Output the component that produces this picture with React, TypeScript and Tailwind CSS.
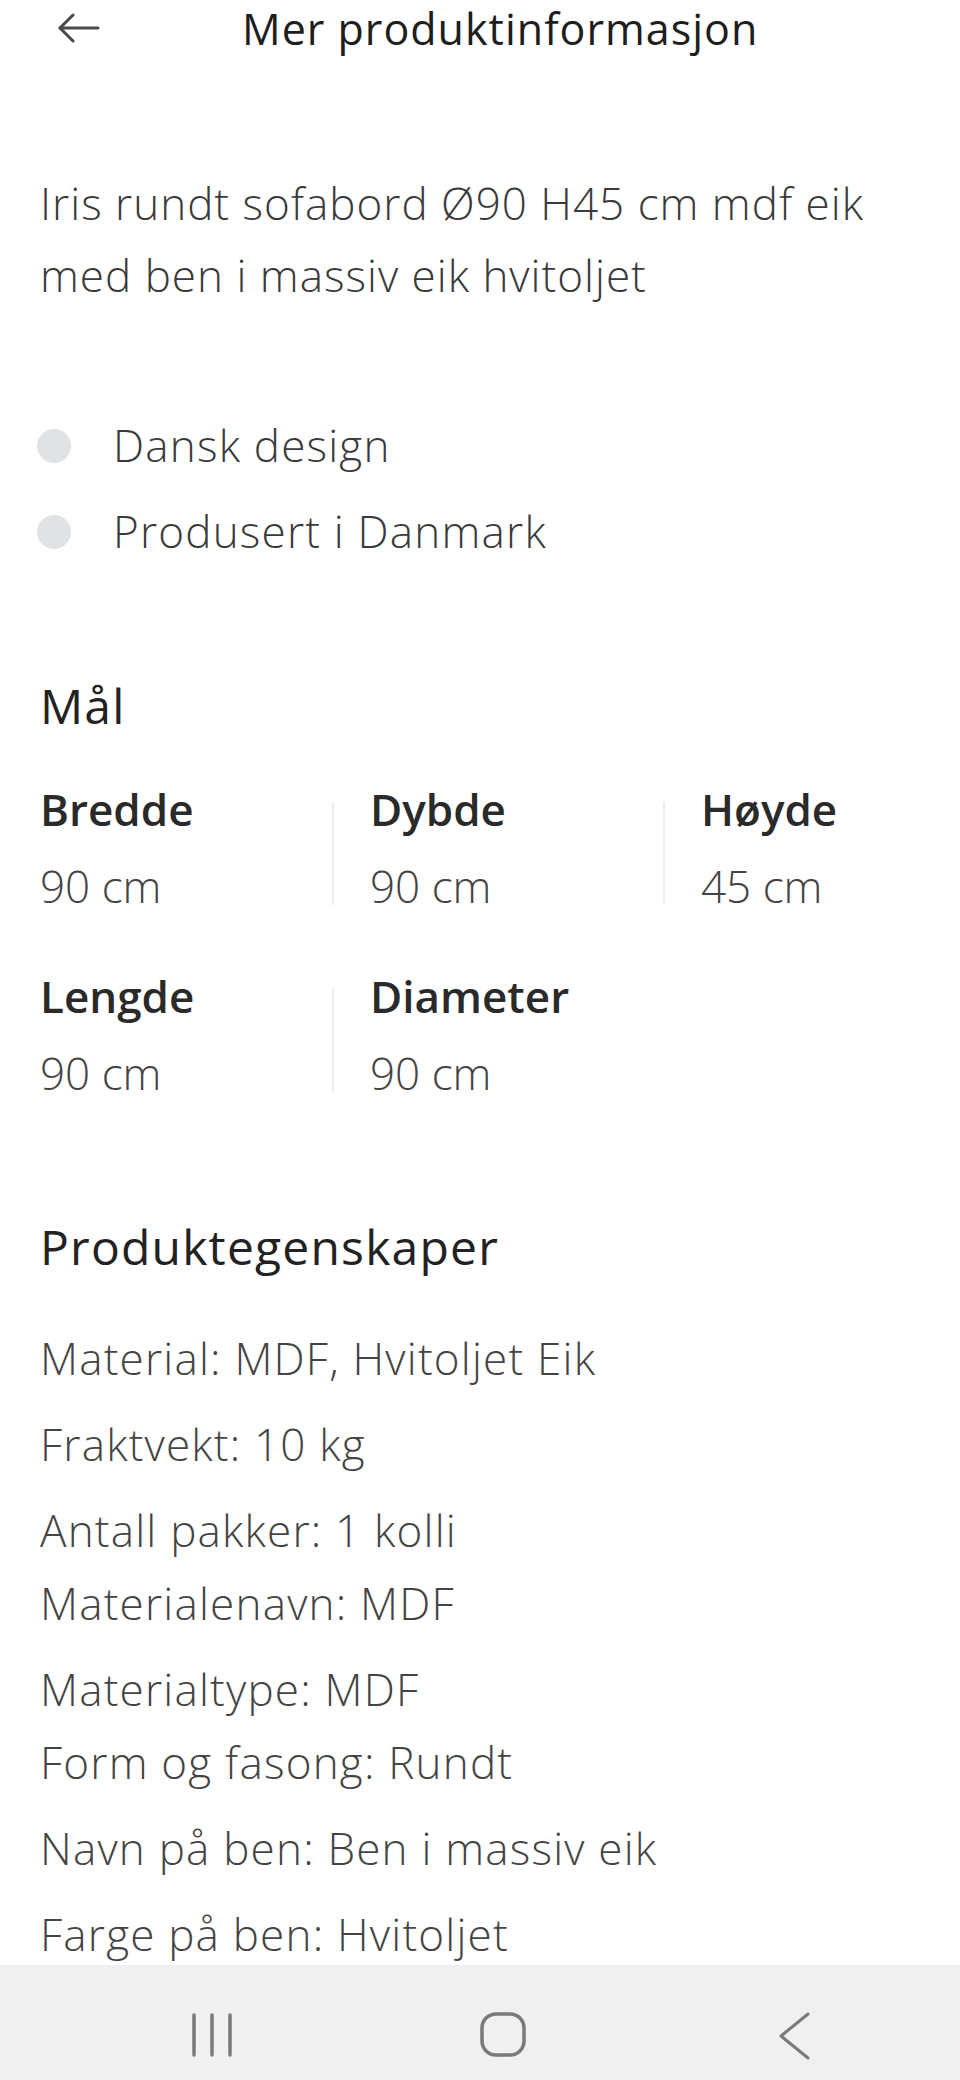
import React from "react";

const font = { fontFamily: '"Open Sans", "Noto Sans", sans-serif' };

function BackArrow() {
  return (
    <svg width="44" height="32" viewBox="0 0 44 32" fill="none" stroke="#4a4a4a" strokeWidth="3" strokeLinecap="round" strokeLinejoin="round">
      <path d="M2 15 H40" />
      <path d="M15 2 L2 15 L15 28" />
    </svg>
  );
}

function Dimension({ label, value }: { label: string; value: string }) {
  return (
    <div>
      <div className="text-[44px] leading-[56px] font-semibold text-[#2a2a2a]">{label}</div>
      <div className="mt-[21px] text-[44px] leading-[56px] font-light text-[#444]">{value}</div>
    </div>
  );
}

function Divider() {
  return <div className="w-[2px] self-stretch mt-[21px] mb-[9px] bg-[#ececec]" />;
}

export default function App() {
  const props: string[][] = [
    ["Material: MDF, Hvitoljet Eik"],
    ["Fraktvekt: 10 kg"],
    ["Antall pakker: 1 kolli", "Materialenavn: MDF"],
    ["Materialtype: MDF", "Form og fasong: Rundt"],
    ["Navn på ben: Ben i massiv eik"],
    ["Farge på ben: Hvitoljet"],
  ];

  return (
    <div className="h-[2080px] w-[960px] flex flex-col bg-white overflow-hidden" style={font}>
      <main className="flex-1 overflow-hidden">
        {/* header */}
        <header className="h-[58px] flex items-center">
          <button className="ml-[58px] w-[44px] h-[32px] flex items-center">
            <BackArrow />
          </button>
          <h1 className="ml-[140px] text-[43px] leading-[58px] font-medium text-[#1e1e1e] tracking-[1px]">
            Mer produktinformasjon
          </h1>
        </header>

        {/* description */}
        <p className="mt-[109px] px-[40px] text-[44px] leading-[72px] font-light text-[#3a3a3a] tracking-[1px]">
          Iris rundt sofabord Ø90 H45 cm mdf eik med ben i massiv eik hvitoljet
        </p>

        {/* highlights */}
        <ul className="mt-[91px] pl-[37px]">
          {["Dansk design", "Produsert i Danmark"].map((t) => (
            <li key={t} className="flex items-center h-[86px]">
              <span className="w-[34px] h-[34px] rounded-full bg-[#dfe3e5] mt-[2px]" />
              <span className="ml-[42px] text-[44px] leading-[86px] font-light text-[#3a3a3a] tracking-[1.2px]">{t}</span>
            </li>
          ))}
        </ul>

        {/* dimensions */}
        <section className="mt-[102px] px-[40px]">
          <h2 className="text-[48px] leading-[60px] font-medium text-[#222] tracking-[1.2px]">Mål</h2>
          <div className="mt-[45px] flex">
            <div className="w-[292px]">
              <Dimension label="Bredde" value="90 cm" />
            </div>
            <Divider />
            <div className="w-[329px] pl-[36px]">
              <Dimension label="Dybde" value="90 cm" />
            </div>
            <Divider />
            <div className="pl-[36px]">
              <Dimension label="Høyde" value="45 cm" />
            </div>
          </div>
          <div className="mt-[54px] flex">
            <div className="w-[292px]">
              <Dimension label="Lengde" value="90 cm" />
            </div>
            <Divider />
            <div className="w-[329px] pl-[36px]">
              <Dimension label="Diameter" value="90 cm" />
            </div>
          </div>
        </section>

        {/* properties */}
        <section className="mt-[116px] px-[40px]">
          <h2 className="text-[48px] leading-[60px] font-medium text-[#222] tracking-[1.2px]">Produktegenskaper</h2>
          <div className="mt-[45px] flex flex-col gap-[13px]">
            {props.map((lines, i) => (
              <p key={i} className="text-[44px] leading-[73px] font-light text-[#444] tracking-[1.2px]">
                {lines.map((l, j) => (
                  <span key={j} className="block">{l}</span>
                ))}
              </p>
            ))}
          </div>
        </section>
      </main>

      {/* system navigation bar */}
      <nav className="h-[115px] shrink-0 bg-[#eef0f1] flex items-start pt-[47px]">
        <svg width="44" height="46" viewBox="0 0 44 46" fill="none" stroke="#7a7a7a" strokeWidth="3.5" strokeLinecap="round" className="ml-[190px]">
          <path d="M4 3 V43" />
          <path d="M22 3 V43" />
          <path d="M40 3 V43" />
        </svg>
        <svg width="46" height="46" viewBox="0 0 46 46" fill="none" stroke="#7a7a7a" strokeWidth="3.5" className="ml-[246px]">
          <rect x="2" y="2" width="42" height="41" rx="14" />
        </svg>
        <svg width="36" height="48" viewBox="0 0 36 48" fill="none" stroke="#7a7a7a" strokeWidth="3" strokeLinecap="round" strokeLinejoin="round" className="ml-[251px]">
          <path d="M31 2 L4 24 L31 46" />
        </svg>
      </nav>
    </div>
  );
}
